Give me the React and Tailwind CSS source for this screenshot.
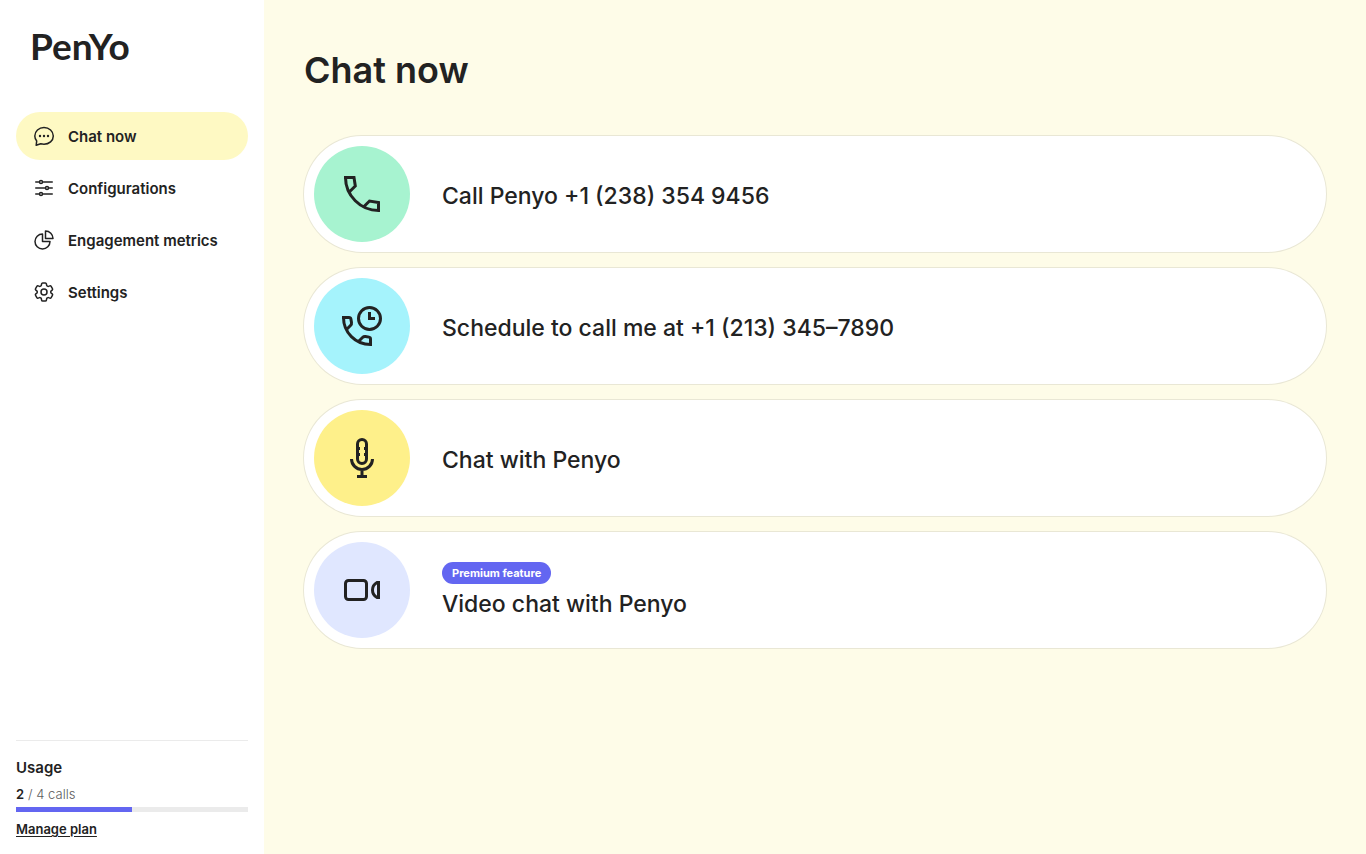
import React from "react";
import {
  HiOutlineAdjustmentsHorizontal,
  HiOutlineChartPie,
  HiOutlineCog6Tooth,
} from "react-icons/hi2";

function ChatBubbleIcon({ className }) {
  return (
    <svg viewBox="0 0 24 24" fill="none" stroke="currentColor" strokeWidth="1.5" strokeLinejoin="round" className={className} aria-hidden="true">
      <path d="M4.2 21.2L4.7 16.9C3.5 15.5 2.8 13.8 2.8 12C2.8 7.3 6.9 3.6 12 3.6S21.3 7.3 21.3 12S17.1 20.2 12 20.2C10.9 20.2 9.8 20.1 8.7 19.8Z" />
      <g fill="currentColor" stroke="none">
        <circle cx="8" cy="12" r="1.2" />
        <circle cx="12" cy="12" r="1.2" />
        <circle cx="16" cy="12" r="1.2" />
      </g>
    </svg>
  );
}

function ActionIcon({ children }) {
  return (
    <svg viewBox="0 0 48 48" fill="none" stroke="currentColor" strokeWidth="3" className="size-12" aria-hidden="true">
      {children}
    </svg>
  );
}

const navItems = [
  { label: "Chat now", Icon: ChatBubbleIcon, active: true },
  { label: "Configurations", Icon: HiOutlineAdjustmentsHorizontal },
  { label: "Engagement metrics", Icon: HiOutlineChartPie },
  { label: "Settings", Icon: HiOutlineCog6Tooth },
];

const actions = [
  {
    label: "Call Penyo +1 (238) 354 9456",
    tone: "bg-[#a7f3d0]",
    icon: (
      <ActionIcon>
        <path d="M7.5 7.5C7.5 25.5 22.5 40.5 40.5 40.5V32.5L31.5 31L25.5 37M11 22.3L17.3 16L16 7.5H6" />
      </ActionIcon>
    ),
  },
  {
    label: "Schedule to call me at +1 (213) 345–7890",
    tone: "bg-[#a5f3fc]",
    icon: (
      <ActionIcon>
        <circle cx="31.5" cy="16.5" r="11" />
        <path d="M31.5 10V16.5H37" />
        <path d="M5.5 15.5C5.5 30.5 17.5 42.5 32.5 42.5V37C32.5 35.8 32 35.3 31 35.1L27.5 34.5C26.3 34.3 25.4 34.6 24.5 35.5L20.5 39.5M8.5 27.5L12.5 23.5C13.4 22.6 13.7 21.7 13.5 20.5L12.9 17C12.7 16 12.2 15.5 11 15.5H4" />
      </ActionIcon>
    ),
  },
  {
    label: "Chat with Penyo",
    tone: "bg-[#fef08a]",
    icon: (
      <ActionIcon>
        <rect x="19.5" y="5.5" width="9" height="24" rx="4.5" />
        <path d="M20 14.5H22M26 14.5H28M20 20.5H22M26 20.5H28" />
        <path d="M13.5 25A10.5 10.5 0 0 0 34.5 25M24 35.5V42M19 42.5H29" />
      </ActionIcon>
    ),
  },
  {
    label: "Video chat with Penyo",
    badge: "Premium feature",
    tone: "bg-[#e0e7ff]",
    icon: (
      <ActionIcon>
        <rect x="7.5" y="14.5" width="21" height="19" rx="3" />
        <path d="M40.5 16.5V31.5H39C36.3 30 34.5 27.5 34.5 24S36.3 18 39 16.5Z" />
      </ActionIcon>
    ),
  },
];

function Sidebar() {
  return (
    <aside className="flex w-66 shrink-0 flex-col bg-white px-4 pb-3.5">
      <a href="#" className="mt-5.5 mb-10.5 flex h-12 items-center pl-3.5 font-[Lato,sans-serif] text-[37px] leading-12 font-bold">
        PenYo
      </a>
      <nav className="flex flex-col gap-1" aria-label="Main">
        {navItems.map(({ label, Icon, active }) => (
          <a
            key={label}
            href="#"
            aria-current={active ? "page" : undefined}
            className={`flex h-12 items-center gap-3 rounded-full px-4 text-[15px] font-semibold ${active ? "bg-[#fef9c3]" : ""}`}
          >
            <Icon className="size-6" />
            <span className="pt-0.5">{label}</span>
          </a>
        ))}
      </nav>
      <section className="mt-auto border-t border-[#ebebeb] pt-[15px]">
        <h2 className="text-[15px] leading-6 font-semibold">Usage</h2>
        <p id="usage" className="mt-1 text-[13px] leading-5 font-light text-[#5c5c5c]">
          <strong className="font-semibold text-[#222222]">2</strong>
          <span className="ml-1">/ 4 calls</span>
        </p>
        <div role="progressbar" aria-labelledby="usage" aria-valuenow={2} aria-valuemin={0} aria-valuemax={4} className="mt-[3px] h-[5px] bg-[#ebebeb]">
          <div className="h-full w-1/2 bg-[#6366f1]" />
        </div>
        <a href="#" className="mt-[7px] inline-block text-[13px] leading-5 font-semibold underline underline-offset-2">
          Manage plan
        </a>
      </section>
    </aside>
  );
}

export default function App() {
  return (
    <div className="flex min-h-screen bg-[#fefce8] font-[Inter,sans-serif] text-[#222222]">
      <Sidebar />
      <main className="min-w-0 flex-1 px-10 pt-11">
        <h1 className="text-[36px] leading-[52px] font-semibold">Chat now</h1>
        <div className="mt-10 flex flex-col gap-4">
          {actions.map(({ label, badge, tone, icon }) => (
            <button
              key={label}
              type="button"
              className="flex w-full items-center gap-8 rounded-full bg-white p-2.5 text-left ring-1 ring-[#e9e7d5]"
            >
              <span className={`flex size-24 shrink-0 items-center justify-center rounded-full ${tone}`}>{icon}</span>
              <span className="flex flex-col items-start gap-0.5 pt-1">
                {badge && (
                  <span className="rounded-full bg-[#6366f1] px-2.5 text-[11px] leading-[22px] font-bold text-white">{badge}</span>
                )}
                <span className="text-[23px] leading-9 font-medium">{label}</span>
              </span>
            </button>
          ))}
        </div>
      </main>
    </div>
  );
}
